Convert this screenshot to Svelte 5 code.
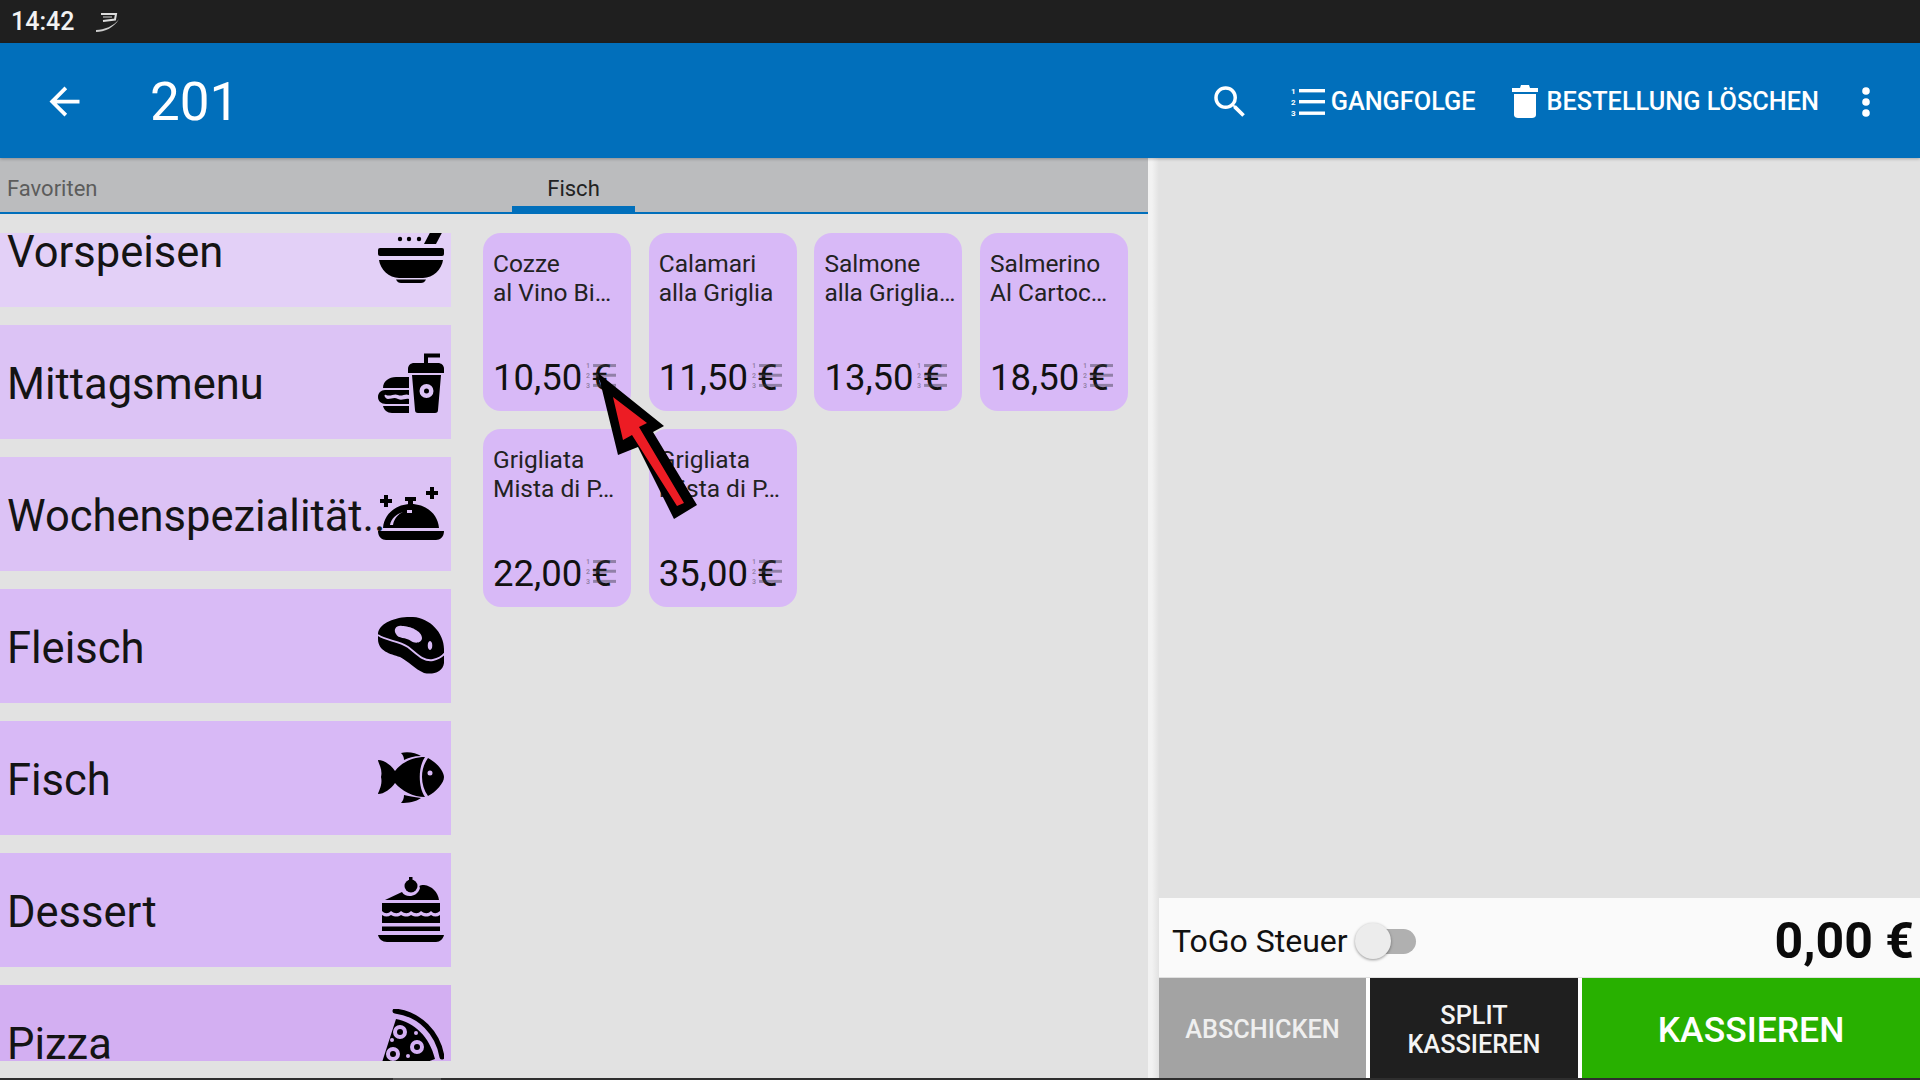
<script>
  const categories = [
    { name: "Vorspeisen", icon: "bowl", bg: "#e3d0f7" },
    { name: "Mittagsmenu", icon: "burger", bg: "#dcc3f5" },
    { name: "Wochenspezialität..", icon: "cloche", bg: "#dcc2f5" },
    { name: "Fleisch", icon: "steak", bg: "#d9bbf6" },
    { name: "Fisch", icon: "fish", bg: "#d8b9f6" },
    { name: "Dessert", icon: "cake", bg: "#d7b8f6" },
    { name: "Pizza", icon: "pizza", bg: "#d3aff2" },
  ];

  const dishes = [
    { line1: "Cozze", line2: "al Vino Bi…", price: "10,50 €" },
    { line1: "Calamari", line2: "alla Griglia", price: "11,50 €" },
    { line1: "Salmone", line2: "alla Griglia…", price: "13,50 €" },
    { line1: "Salmerino", line2: "Al Cartoc…", price: "18,50 €" },
    { line1: "Grigliata", line2: "Mista di P…", price: "22,00 €" },
    { line1: "Grigliata", line2: "Mista di P…", price: "35,00 €" },
  ];
</script>

{#snippet listIcon(cls)}
  <svg class={cls} viewBox="0 0 34 28" aria-hidden="true">
    <text x="0" y="6" class="mini">1</text>
    <text x="0" y="17" class="mini">2</text>
    <text x="0" y="28" class="mini">3</text>
    <rect x="8" y="1" width="26" height="3.4" />
    <rect x="8" y="12" width="26" height="3.4" />
    <rect x="8" y="23.500" width="26" height="3.4" />
  </svg>
{/snippet}

{#snippet catIcon(name)}
  <svg class="cat-icon" viewBox="0 0 66 66" aria-hidden="true">
    {#if name === "bowl"}
      <circle cx="22" cy="22" r="2.2" /><circle cx="31" cy="22" r="2.2" /><circle cx="41" cy="22" r="2.2" />
      <path d="M46 27 56 8H68L58 27Z" />
      <rect x="0" y="31" width="66" height="8" rx="2" />
      <path d="M1 43H65C64 52 55 61 45 61H21C11 61 2 52 1 43Z" />
      <path d="M18 62.500H48C47 65 45 66 43 66H23C21 66 19 65 18 62.500Z" />
    {:else if name === "burger"}
      <path d="M48 15V6.500H62" fill="none" stroke="currentColor" stroke-width="4" />
      <path d="M30 24V20C30 16 33 14 36 14H60C63 14 66 16 66 20V24Z" />
      <path fill-rule="evenodd" d="M34 26H63L60 61C60 63 59 64 57 64H40C38 64 37 63 37 61ZM48.500 35A7 7 0 1 0 48.500 49 7 7 0 1 0 48.500 35ZM48.500 39.500A2.500 2.500 0 1 1 48.500 44.500 2.500 2.500 0 1 1 48.500 39.500Z" />
      <path d="M5 39C5 32 11 28 18 28H31V39Z" />
      <path d="M7 41H31V46C27 44 24 48 20 46 16 44 13 48 8 46 5 45 7 50 10 50 14 50 16 48 20 50 24 52 27 49 31 50V55H8C3 55 0 52 0 48 0 44 3 41 7 41Z" />
      <path d="M5 57H31V64H14C9 64 6 61 5 57Z" />
    {:else if name === "cloche"}
      <path d="M54 6V18M48 12H60M8 14V26M2 20H14" fill="none" stroke="currentColor" stroke-width="4" />
      <path d="M27 16H38V20H35V23H30V20H27Z" />
      <path fill-rule="evenodd" d="M5 47C6 33 18 23 33 23 48 23 60 33 61 47ZM15 44C16 38 20 33 25 31 18 33 13 38 12 44ZM29 29H34V32H29Z" />
      <path d="M0 50H66C66 56 62 59 58 59H8C4 59 0 56 0 50Z" />
    {:else if name === "steak"}
      <path fill-rule="evenodd" d="M0 20C2 9 20 3 35 4 52 5 66 20 66 36V50C65 59 55 62 46 60 37 56 30 48 22 44 12 41 0 38 0 26ZM24 13C18 12 15 17 18 21 20 26 28 24 33 28 37 31 44 30 44 25 44 18 32 13 24 13ZM52 28C49 28 49 37 52 37 55 37 55 28 52 28Z" />
      <path d="M0 22C8 28 20 27 30 34 38 40 45 49 55 47 60 46 64 44 67 40" fill="none" stroke="var(--bg)" stroke-width="1.800" />
    {:else if name === "fish"}
      <path d="M0 15C6 15 13 20 17 26 24 17 35 12 47 12 40 22 40 42 47 52 35 52 24 46 17 38 13 44 6 49 0 49 0 47 5 40 3 32 5 24 0 18 0 15Z" />
      <path fill-rule="evenodd" d="M50 13C58 17 66 26 66 32 66 38 58 47 50 51 42 40 42 24 50 13ZM52 25.500A2.500 2.500 0 1 0 52 30.500 2.500 2.500 0 1 0 52 25.500Z" />
      <path d="M23 8C30 6 38 8 43 11 36 11 30 13 26 15 26 12 25 10 23 8Z" />
      <path d="M26 50C30 51 36 52 43 53 38 57 30 58 23 58 25 56 26 53 26 50Z" />
    {:else if name === "cake"}
      <circle cx="33" cy="9" r="6.500" />
      <rect x="31" y="0" width="3.500" height="5" />
      <path d="M7 23 24 15C27 21 39 21 42 11 41 9 41 8 46 8 54 9 60 15 61 23Z" />
      <path d="M4 26H62V34C58 37 56 37 53 34 50 37 47 37 43 34 40 37 37 37 33 34 30 37 27 37 23 34 20 37 17 37 13 34 10 37 7 37 4 34Z" />
      <path d="M4 38C7 40 10 40 13 38 17 40 20 40 23 38 27 40 30 40 33 38 37 40 40 40 43 38 47 40 50 40 53 38 56 40 59 40 62 38V46H4Z" />
      <rect x="4" y="49.500" width="58" height="4.500" />
      <path d="M0 58H66C65 62 62 65 58 65H9C4 65 1 62 0 58Z" />
    {:else}
      <path d="M17 2C42 5 60 24 64 48" fill="none" stroke="currentColor" stroke-width="5" stroke-linecap="round" />
      <path fill-rule="evenodd" d="M18 10C36 13 52 28 57 50L-2 72ZM22 16A7 7 0 1 0 22 30 7 7 0 1 0 22 16ZM22 20A3 3 0 1 1 22 26 3 3 0 1 1 22 20ZM39 31A7 7 0 1 0 39 45 7 7 0 1 0 39 31ZM39 35A3 3 0 1 1 39 41 3 3 0 1 1 39 35ZM15 38A7 7 0 1 0 15 52 7 7 0 1 0 15 38ZM15 42A3 3 0 1 1 15 48 3 3 0 1 1 15 42ZM38 22A2 2 0 1 0 38 26 2 2 0 1 0 38 22ZM14 29A2 2 0 1 0 14 33 2 2 0 1 0 14 29ZM30 45A2 2 0 1 0 30 49 2 2 0 1 0 30 45Z" />
    {/if}
  </svg>
{/snippet}

<div class="screen">
  <div class="status">
    <span>14:42</span>
    <svg class="status-icon" viewBox="0 0 24 20" aria-hidden="true">
      <path d="M5 2H20L19 7.500 7 9" fill="none" stroke="#ddd" stroke-width="2" />
      <path d="M7 5H16" fill="none" stroke="#999" stroke-width="1.500" />
      <path d="M0 18C8 18 18 14 23 7 18 16 8 20 0 20Z" fill="#ccc" />
    </svg>
  </div>

  <header class="appbar">
    <svg class="back" viewBox="0 0 24 24" aria-hidden="true"><path d="M20 11H7.830l5.590-5.590L12 4l-8 8 8 8 1.410-1.410L7.830 13H20v-2z" /></svg>
    <h1>201</h1>
    <div class="actions">
      <svg class="search" viewBox="0 0 24 24" aria-hidden="true"><path d="M15.500 14h-.79l-.28-.27A6.471 6.471 0 0 0 16 9.500 6.500 6.500 0 1 0 9.500 16c1.610 0 3.090-.59 4.230-1.570l.27.28v.79l5 4.990L20.490 19l-4.990-5zm-6 0C7.010 14 5 11.990 5 9.500S7.010 5 9.500 5 14 7.010 14 9.500 11.990 14 9.500 14z" /></svg>
      <div class="action gang">
        {@render listIcon("list-white")}
        <span>GANGFOLGE</span>
      </div>
      <div class="action trash">
        <svg class="trash-icon" viewBox="0 0 26 33" aria-hidden="true">
          <path d="M0 3H8L9 0H17L18 3H26V7H0Z" />
          <path d="M2 9H24V30C24 32 22 33 20 33H6C4 33 2 32 2 30Z" />
        </svg>
        <span>BESTELLUNG LÖSCHEN</span>
      </div>
      <svg class="more" viewBox="0 0 10 30" aria-hidden="true">
        <circle cx="5" cy="4" r="3.800" /><circle cx="5" cy="15" r="3.800" /><circle cx="5" cy="26" r="3.800" />
      </svg>
    </div>
  </header>

  <div class="main">
    <section class="left">
      <nav class="tabs">
        <div class="tab muted">Favoriten</div>
        <div class="tab active">Fisch</div>
      </nav>
      <div class="body">
        <div class="categories">
          <div class="cat-scroll">
            {#each categories as cat}
              <div class="cat" style="--bg: {cat.bg}">
                <span>{cat.name}</span>
                {@render catIcon(cat.icon)}
              </div>
            {/each}
          </div>
        </div>
        <div class="dishes">
          {#each dishes as dish}
            <div class="dish">
              <div class="dish-name">{dish.line1}<br />{dish.line2}</div>
              <div class="price">{dish.price}</div>
              {@render listIcon("list-grey")}
            </div>
          {/each}
        </div>
      </div>
    </section>

    <div class="divider"></div>

    <section class="right">
      <div class="order"></div>
      <div class="total-row">
        <span class="togo">ToGo Steuer</span>
        <div class="switch"><div class="thumb"></div></div>
        <strong>0,00 €</strong>
      </div>
      <div class="buttons">
        <div class="btn grey">ABSCHICKEN</div>
        <div class="btn dark">SPLIT<br />KASSIEREN</div>
        <div class="btn green">KASSIEREN</div>
      </div>
    </section>
  </div>

  <div class="navline"><div class="nav-thumb"></div></div>

  <svg class="pointer" viewBox="0 0 1920 1080" aria-hidden="true">
    <path d="M598 373 664 426 653 432 697 505 674 519 638 447 618 455Z" fill="#000" />
    <path d="M613 397 647 423 639 427 684 503 677 506 632 435 623 440Z" fill="#ed1c24" />
  </svg>
</div>

<style>
  :global(body) {
    margin: 0;
  }
  .screen {
    position: relative;
    width: 1920px;
    height: 1080px;
    overflow: hidden;
    display: flex;
    flex-direction: column;
    font-family: Roboto, "Liberation Sans", sans-serif;
    background: #e2e2e2;
  }
  .status {
    height: 43px;
    flex: none;
    background: #1f1f1f;
    color: #f2f2f2;
    display: flex;
    align-items: center;
    padding-left: 11px;
    font-size: 25px;
    font-weight: 500;
    gap: 22px;
  }
  .status-icon {
    width: 24px;
    height: 20px;
  }
  .appbar {
    height: 115px;
    flex: none;
    box-sizing: border-box;
    padding-top: 2px;
    background: #016fbb;
    color: #fff;
    display: flex;
    align-items: center;
    fill: #fff;
    box-shadow: 0 1px 3px rgba(0, 0, 0, 0.25);
    position: relative;
    z-index: 1;
  }
  .back {
    width: 45px;
    height: 45px;
    margin-left: 42px;
  }
  h1 {
    margin: 0 0 0 63px;
    font-size: 53px;
    font-weight: 400;
  }
  .actions {
    margin-left: auto;
    display: flex;
    align-items: center;
    padding-right: 49px;
  }
  .search {
    width: 42px;
    height: 42px;
    margin-right: 40px;
  }
  .action {
    display: flex;
    align-items: center;
    font-size: 25.300px;
    font-weight: 500;
  }
  .gang {
    gap: 6px;
    margin-right: 36px;
  }
  .trash {
    gap: 9px;
    margin-right: 42px;
  }
  .list-white {
    width: 34px;
    height: 28px;
    fill: #fff;
  }
  .trash-icon {
    width: 26px;
    height: 33px;
  }
  .more {
    width: 10px;
    height: 30px;
  }
  .mini {
    font-size: 8px;
    font-weight: 700;
  }
  .main {
    flex: 1;
    min-height: 0;
    display: flex;
  }
  .left {
    width: 1148px;
    flex: none;
    display: flex;
    flex-direction: column;
  }
  .tabs {
    height: 54px;
    flex: none;
    background: #bbbcbe;
    border-bottom: 2px solid #016fbb;
    display: flex;
    position: relative;
    font-size: 22px;
  }
  .tab {
    display: flex;
    align-items: center;
    height: 100%;
    box-sizing: border-box;
    padding-top: 6px;
  }
  .muted {
    padding-left: 7px;
    width: 512px;
    color: #5c5c5c;
  }
  .active {
    width: 123px;
    justify-content: center;
    color: #222;
    border-bottom: 6px solid #016fbb;
    padding-top: 12px;
  }
  .body {
    flex: 1;
    min-height: 0;
    display: flex;
    align-items: flex-start;
    padding-top: 19px;
  }
  .categories {
    width: 451px;
    height: 828px;
    flex: none;
    overflow: hidden;
  }
  .cat-scroll {
    margin-top: -40px;
    display: flex;
    flex-direction: column;
    gap: 18px;
  }
  .cat {
    height: 114px;
    flex: none;
    background: var(--bg);
    display: flex;
    align-items: center;
    padding: 0 7px;
    font-size: 43.500px;
    color: #141414;
    box-sizing: border-box;
  }
  .cat span {
    flex: 1;
    min-width: 0;
    white-space: nowrap;
    position: relative;
    top: 2px;
  }
  .cat-icon {
    width: 66px;
    height: 66px;
    flex: none;
    fill: #000;
    color: #000;
    position: relative;
  }
  .dishes {
    margin-left: 32px;
    display: grid;
    grid-template-columns: repeat(4, 148px);
    grid-auto-rows: 178px;
    column-gap: 17.700px;
    row-gap: 18px;
  }
  .dish {
    position: relative;
    background: #d8b9f7;
    border-radius: 18px;
    padding: 16px 10px 0;
    color: #222;
    box-sizing: border-box;
  }
  .dish-name {
    font-size: 24.500px;
    line-height: 29px;
    white-space: nowrap;
  }
  .price {
    position: absolute;
    left: 10px;
    bottom: 12px;
    font-size: 36.500px;
    white-space: nowrap;
    color: #111;
  }
  .list-grey {
    position: absolute;
    left: 103px;
    top: 130px;
    width: 30px;
    height: 25px;
    fill: rgba(60, 60, 70, 0.45);
  }
  .divider {
    width: 11px;
    flex: none;
    background: linear-gradient(90deg, #f2f2f2 0 4px, #e2e2e2 11px);
  }
  .right {
    flex: 1;
    display: flex;
    flex-direction: column;
  }
  .order {
    flex: 1;
  }
  .total-row {
    height: 80px;
    flex: none;
    box-sizing: border-box;
    background: #fafafa;
    display: flex;
    align-items: center;
    padding: 7px 6px 0 13px;
    border-bottom: 1px solid #e0e0e0;
  }
  .togo {
    font-size: 32px;
    color: #111;
  }
  .switch {
    position: relative;
    width: 54px;
    height: 25px;
    margin-left: 14px;
    background: #b0b0b0;
    border-radius: 13px;
  }
  .thumb {
    position: absolute;
    left: -7px;
    top: -6px;
    width: 36px;
    height: 36px;
    border-radius: 50%;
    background: #ececec;
    box-shadow: 0 1px 3px rgba(0, 0, 0, 0.4);
  }
  .total-row strong {
    margin-left: auto;
    font-size: 50px;
    font-weight: 700;
    color: #0a0a0a;
  }
  .buttons {
    height: 100px;
    flex: none;
    display: flex;
    gap: 4px;
    background: #fff;
  }
  .btn {
    display: flex;
    align-items: center;
    justify-content: center;
    text-align: center;
    font-weight: 500;
    padding-top: 3px;
    box-sizing: border-box;
  }
  .grey {
    width: 207px;
    background: #a3a3a3;
    color: #efefef;
    font-size: 25.300px;
  }
  .dark {
    width: 208px;
    background: #1f1f1f;
    color: #f4f4f4;
    font-size: 25.300px;
    line-height: 29px;
  }
  .green {
    flex: 1;
    background: #28b000;
    color: #fff;
    font-size: 35.500px;
  }
  .navline {
    height: 2px;
    flex: none;
    background: #2e2e2e;
    position: relative;
  }
  .nav-thumb {
    position: absolute;
    left: 393px;
    width: 48px;
    height: 2px;
    background: #555;
  }
  .pointer {
    position: absolute;
    inset: 0;
    width: 1920px;
    height: 1080px;
    pointer-events: none;
    z-index: 2;
  }
</style>
